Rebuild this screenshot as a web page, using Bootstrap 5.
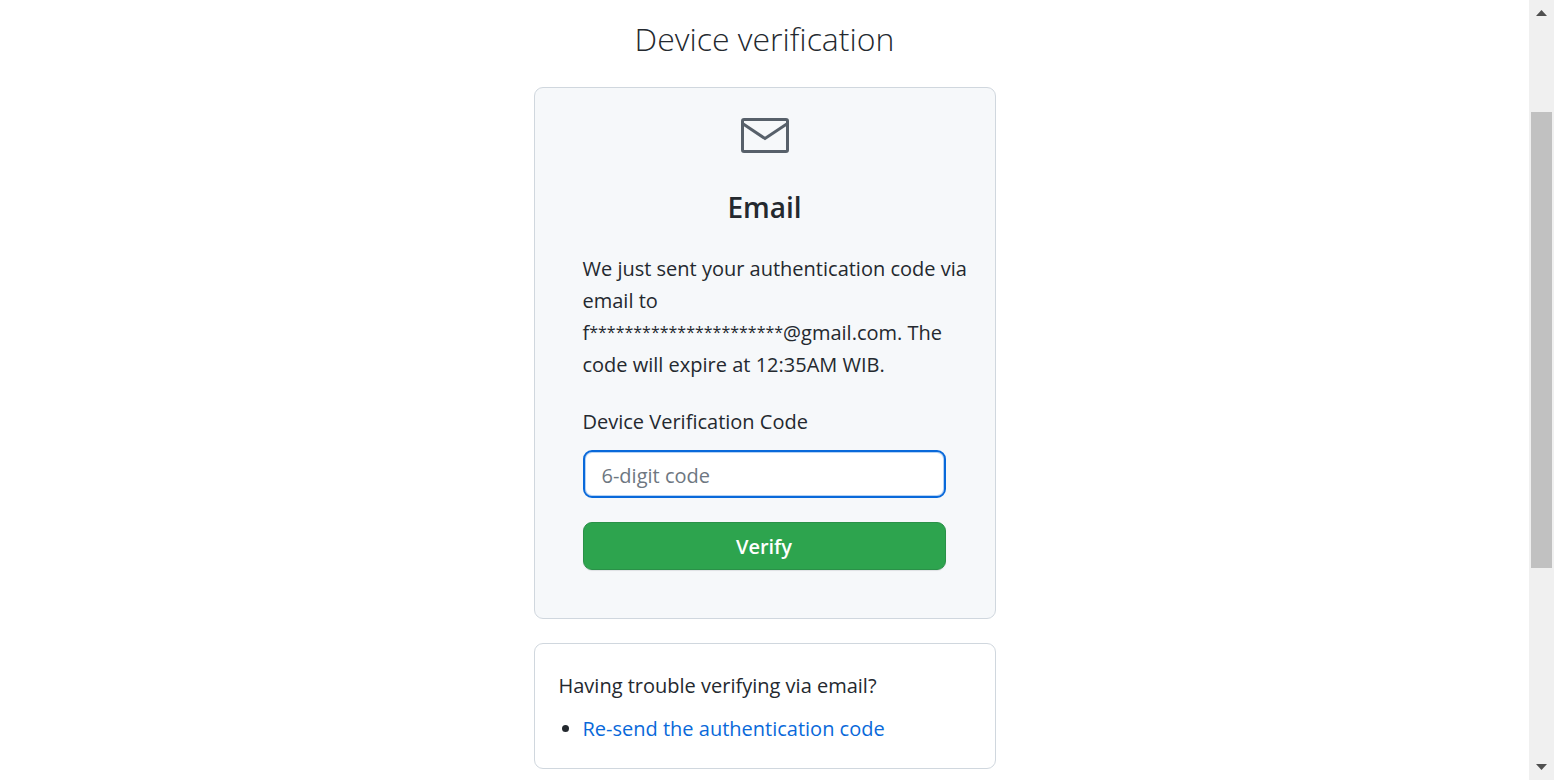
<!DOCTYPE html>
<html lang="en">
<head>
<meta charset="utf-8">
<meta name="viewport" content="width=device-width, initial-scale=1">
<title>Device verification</title>
<link href="https://cdn.jsdelivr.net/npm/bootstrap@5.3.0/dist/css/bootstrap.min.css" rel="stylesheet">
<style>
  body { font-family: "Open Sans", "Noto Sans", sans-serif; font-size: 20px; line-height: 32px; color: #24292f; background: #fff; }
  .page-title { font-size: 32px; line-height: 48px; font-weight: 300; padding-top: 15px; }
  .auth-column { width: 462px; max-width: 100%; }
  .auth-panel { border: 1px solid #d0d7de; border-radius: 9px; }
  .auth-main { background: #f6f8fa; padding: 30px 24px 48px 48px; }
  .auth-center { margin-right: 24px; }
  .method-title { font-size: 28px; line-height: 40px; font-weight: 600; margin: 33px 0 26px; }
  .sent-note { margin-bottom: 25px; }
  .masked { font-size: 16px; line-height: 1; vertical-align: 2px; }
  .auth-form { margin-right: 25px; }
  .auth-form label { margin-bottom: 12px; }
  .code-input { height: 48px; font-size: 20px; padding: 6px 17px 4px; border: 2px solid #0969da; border-radius: 9px; }
  .code-input, .code-input:focus { border-color: #0969da; box-shadow: inset 0 0 0 1px #b5d2f4; }
  .code-input::placeholder { color: #6e7781; }
  .btn-verify, .btn-verify:hover { height: 48px; padding: 2px 0 0; font-size: 20px; font-weight: 600; color: #fff; background: #2da44e; border: 1px solid #2a9148; border-radius: 9px; box-shadow: 0 1px 1px rgba(27, 31, 36, .1); }
  .auth-help { padding: 26px 24px 23px; }
  .auth-help p { margin-bottom: 11px; }
  .auth-help ul { padding-left: 24px; }
  .auth-help a { color: #0969da; }
  .scroll-rail { width: 25px; height: 100vh; background: #f0f0f0; padding: 10px 2px; }
  .scroll-thumb { background: #c1c1c1; height: 60%; margin-top: 96px; }
</style>
</head>
<body>
<div class="d-flex">
  <main class="flex-grow-1 d-flex flex-column align-items-center">
    <h1 class="page-title text-center mb-4">Device verification</h1>
    <div class="auth-column d-flex flex-column gap-4">
      <section class="auth-panel auth-main">
        <div class="auth-center text-center">
          <svg class="d-block mx-auto" width="48" height="36" viewBox="0 0 48 36" fill="none" stroke="#57606a" stroke-width="3" aria-hidden="true"><rect x="1.5" y="1.5" width="45" height="32" rx="1.5"/><path d="M1.5 5.5 24 20.5 46.5 5.5"/></svg>
          <h2 class="method-title">Email</h2>
        </div>
        <p class="sent-note">We just sent your authentication code via email to f<span class="masked">**********************</span>@gmail.com. The code will expire at 12:35AM WIB.</p>
        <form class="auth-form" onsubmit="return false">
          <label for="otp" class="d-block">Device Verification Code</label>
          <input id="otp" class="form-control code-input mb-4" type="text" inputmode="numeric" placeholder="6-digit code">
          <button class="btn btn-verify w-100" type="submit">Verify</button>
        </form>
      </section>
      <section class="auth-panel auth-help">
        <p>Having trouble verifying via email?</p>
        <ul class="mb-0"><li><a class="text-decoration-none" href="#">Re-send the authentication code</a></li></ul>
      </section>
    </div>
  </main>
  <div class="scroll-rail sticky-top flex-shrink-0 d-flex flex-column" aria-hidden="true">
    <svg class="mx-auto flex-shrink-0" width="11" height="6" viewBox="0 0 11 6"><path d="M5.5 0 11 6H0z" fill="#505050"/></svg>
    <div class="scroll-thumb flex-shrink-0"></div>
    <svg class="mx-auto mt-auto flex-shrink-0" width="11" height="6" viewBox="0 0 11 6"><path d="M5.5 6 0 0h11z" fill="#505050"/></svg>
  </div>
</div>
<script src="https://cdn.jsdelivr.net/npm/bootstrap@5.3.0/dist/js/bootstrap.bundle.min.js"></script>
</body>
</html>
